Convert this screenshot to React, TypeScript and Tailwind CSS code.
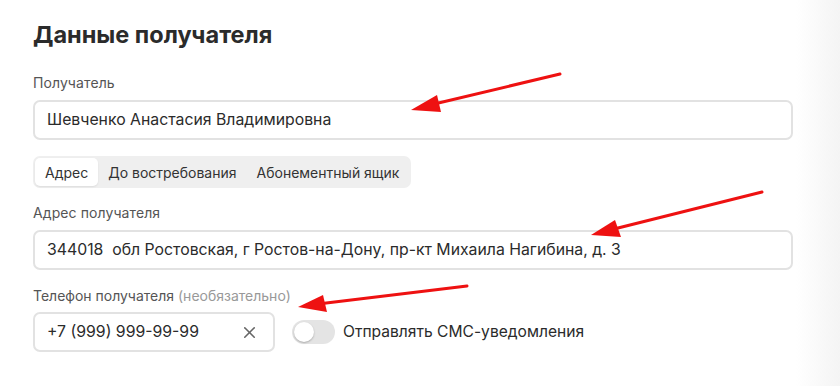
import { X } from 'lucide-react';

const font = { fontFamily: 'Inter, "Noto Sans", sans-serif' };

const Field = ({ value, className = '' }: { value: string; className?: string }) => (
  <div
    className={`h-[40px] flex items-center px-[12px] border-2 border-[#e2e2e2] rounded-[7px] bg-white text-[15.8px] text-[#2b2b2b] ${className}`}
  >
    {value}
  </div>
);

const Arrow = ({ x1, y1, x2, y2, head }: { x1: number; y1: number; x2: number; y2: number; head: string }) => (
  <g>
    <line x1={x1} y1={y1} x2={x2} y2={y2} stroke="#ee1111" strokeWidth={3} strokeLinecap="round" />
    <polygon points={head} fill="#ee1111" />
  </g>
);

export default function App() {
  return (
    <div className="relative flex w-[840px] h-[386px] bg-white overflow-hidden" style={font}>
      <div className="w-[796px] pl-[33px] pr-[3px] pt-[21px]">
        <h2 className="text-[23.5px] leading-[28px] font-bold text-[#2b2b2b]">Данные получателя</h2>

        <div className="mt-[25px] text-[14px] leading-[18px] text-[#555] tracking-[0.1px]">Получатель</div>
        <Field value="Шевченко Анастасия Владимировна" className="mt-[8px]" />

        <div className="mt-[16px] inline-flex items-center p-[2px] bg-[#efefef] rounded-[7px] text-[14px] text-[#333]">
          <div className="h-[28px] px-[10px] flex items-center bg-white rounded-[5px] shadow-[0_1px_2px_rgba(0,0,0,0.08)]">Адрес</div>
          <div className="h-[28px] px-[10px] flex items-center">До востребования</div>
          <div className="h-[28px] px-[10px] flex items-center">Абонементный ящик</div>
        </div>

        <div className="mt-[16px] text-[14px] leading-[18px] text-[#555] tracking-[0.1px]">Адрес получателя</div>
        <Field value="344018  обл Ростовская, г Ростов-на-Дону, пр-кт Михаила Нагибина, д. 3" className="mt-[8px] whitespace-pre" />

        <div className="mt-[17px] text-[14px] leading-[18px] text-[#555]">
          Телефон получателя <span className="text-[#999]">(необязательно)</span>
        </div>
        <div className="mt-[7px] flex items-center">
          <div className="w-[242px] h-[40px] flex items-center justify-between pl-[12px] pr-[14px] border-2 border-[#e2e2e2] rounded-[7px] text-[15.8px] text-[#2b2b2b]">
            <span>+7 (999) 999-99-99</span>
            <X className="w-[19px] h-[19px] text-[#666]" strokeWidth={2} />
          </div>
          <div className="ml-[17px] w-[43px] h-[24px] rounded-full bg-[#e4e4e4] p-[2px] flex items-center">
            <div className="w-[20px] h-[20px] rounded-full bg-white shadow-[0_1px_2px_rgba(0,0,0,0.25)]" />
          </div>
          <span className="ml-[8px] text-[15.6px] text-[#2b2b2b]">Отправлять СМС-уведомления</span>
        </div>
      </div>
      <div className="flex-1 bg-gradient-to-r from-white to-[#f4f4f4]" />

      <svg className="absolute inset-0 pointer-events-none" width={840} height={386}>
        <Arrow x1={560} y1={74} x2={430} y2={105} head="411,110 437,95 441,112" />
        <Arrow x1={762} y1={192} x2={610} y2={230} head="591,235 615,220 621,237" />
        <Arrow x1={467} y1={286} x2={318} y2={304} head="298,307 323,295 327,312" />
      </svg>
    </div>
  );
}
